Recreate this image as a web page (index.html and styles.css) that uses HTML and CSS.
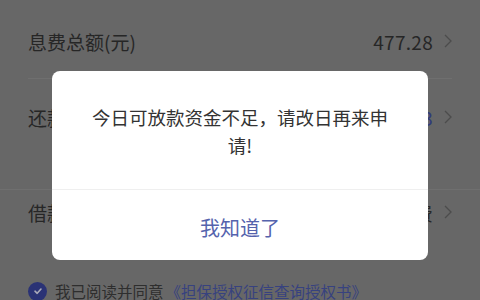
FILE: index.html
```html
<!DOCTYPE html>
<html lang="zh-CN">
<head>
    <meta charset="UTF-8">
    <meta name="viewport" content="width=device-width, initial-scale=1.0">
    <title>借款确认</title>
    <link rel="stylesheet" href="styles.css">
</head>
<body>
    <div class="page">
        <!-- 借款信息列表 -->
        <div class="list">
            <div class="row row-first">
                <span class="label">息费总额(元)</span>
                <span class="value">477.28</span>
                <svg class="arrow" viewBox="0 0 8 14"><polyline points="1,1 7,7 1,13"/></svg>
            </div>
            <div class="row row-tall">
                <span class="label">还款计划</span>
                <span class="value link">12/3</span>
                <svg class="arrow" viewBox="0 0 8 14"><polyline points="1,1 7,7 1,13"/></svg>
            </div>
        </div>
        <div class="list list-second">
            <div class="row row-short">
                <span class="label">借款用途</span>
                <span class="value">日常消费</span>
                <svg class="arrow" viewBox="0 0 8 14"><polyline points="1,1 7,7 1,13"/></svg>
            </div>
        </div>

        <!-- 协议 -->
        <div class="agree">
            <span class="check">
                <svg viewBox="0 0 12 12"><polyline points="3,6.2 5.2,8.3 9,4"/></svg>
            </span>
            <span>我已阅读并同意</span>
            <span class="doc">《担保授权征信查询授权书》</span>
        </div>
    </div>

    <!-- 弹窗 -->
    <div class="dialog">
        <p class="dialog-text">今日可放款资金不足，请改日再来申请!</p>
        <button class="dialog-btn">我知道了</button>
    </div>
</body>
</html>
```
FILE: styles.css
```css
body {
    margin: 0;
    width: 480px;
    height: 300px;
    overflow: hidden;
    background-color: #676767;
    font-family: "Noto Sans CJK SC", "Noto Sans", sans-serif;
    color: #262626;
}
.page {
    padding-top: 4px;
}
.list {
    padding: 0 28px;
}
.list-second {
    border-top: 1px solid #6f6f6f;
}
.row {
    display: flex;
    align-items: center;
    font-size: 19px;
}
.row-first {
    height: 74px;
    border-bottom: 1px solid #6f6f6f;
}
.row-tall {
    height: 110px;
    align-items: flex-start;
    padding-top: 25px;
    box-sizing: border-box;
}
.row-short {
    height: 44px;
}
.label {
    flex: 1;
}
.value {
    letter-spacing: 0.3px;
}
.link {
    color: #303a7a;
}
.arrow {
    width: 8px;
    height: 14px;
    margin-left: 11px;
    fill: none;
    stroke: #4c4c4c;
    stroke-width: 1.3;
}
.row-tall .arrow {
    margin-top: 6px;
}
.agree {
    display: flex;
    align-items: center;
    margin-top: 46px;
    padding-left: 28px;
    font-size: 15.5px;
    color: #2e2e2e;
}
.check {
    display: flex;
    align-items: center;
    justify-content: center;
    width: 19px;
    height: 19px;
    border-radius: 50%;
    background-color: #2a3275;
    margin-right: 8px;
}
.check svg {
    width: 12px;
    height: 12px;
    fill: none;
    stroke: #a9a9b8;
    stroke-width: 1.6;
    stroke-linecap: round;
    stroke-linejoin: round;
}
.doc {
    color: #37427f;
    margin-left: 2px;
}
.dialog {
    position: absolute;
    left: 52px;
    top: 71px;
    width: 376px;
    height: 189px;
    background-color: white;
    border-radius: 8px;
    display: flex;
    flex-direction: column;
}
.dialog-text {
    margin: 0;
    padding: 32px 38px 30px;
    font-size: 18.5px;
    line-height: 28px;
    text-align: center;
    color: #333;
    border-bottom: 1px solid #efefef;
}
.dialog-btn {
    flex: 1;
    border: none;
    background: none;
    font-family: inherit;
    font-size: 20px;
    color: #5563ad;
    padding: 4px 0 0;
}
```
